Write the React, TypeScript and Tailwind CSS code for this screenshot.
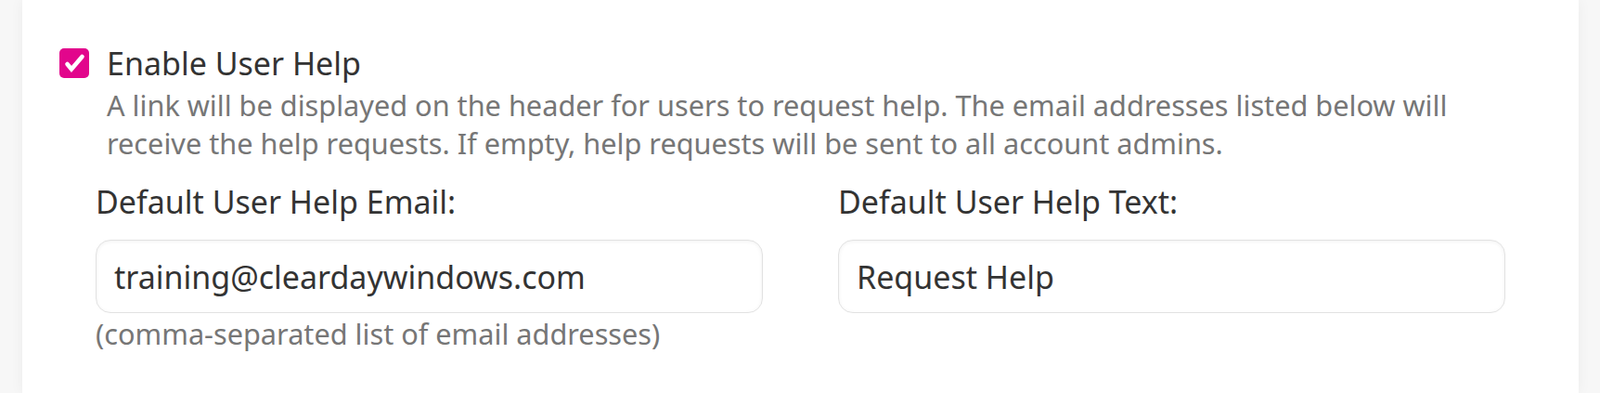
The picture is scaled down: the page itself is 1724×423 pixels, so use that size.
import React, { useState } from 'react';

export default function App() {
  const [enabled, setEnabled] = useState(true);
  const [email, setEmail] = useState('training@cleardaywindows.com');
  const [helpText, setHelpText] = useState('Request Help');

  return (
    <div
      className="min-h-screen w-full bg-[#f7f7f7] pl-[24px] pr-[23px]"
      style={{ fontFamily: '"Noto Sans", "Open Sans", sans-serif' }}
    >
      <div className="min-h-[423px] bg-white shadow-[0_0_14px_rgba(0,0,0,0.05)] pl-[40px] pt-[52px]">
        <div className="flex items-start gap-[19px]">
          <button
            type="button"
            onClick={() => setEnabled(!enabled)}
            className={
              'flex h-[32px] w-[32px] shrink-0 items-center justify-center rounded-[5px] ' +
              (enabled ? 'bg-[#e2068c]' : 'border border-[#ccc] bg-white')
            }
          >
            {enabled && (
              <svg width="32" height="32" viewBox="0 0 32 32" fill="none">
                <path d="M8.5 17l4.5 5.5L24.5 9" stroke="white" strokeWidth="4.6" strokeLinecap="round" strokeLinejoin="miter" />
              </svg>
            )}
          </button>
          <div>
            <div className="text-[34px] leading-[32px] text-[#333]">Enable User Help</div>
            <p className="mt-[9px] text-[30.7px] leading-[41px] text-[#767676]">
              A link will be displayed on the header for users to request help. The email addresses listed below will
              <br />
              receive the help requests. If empty, help requests will be sent to all account admins.
            </p>
          </div>
        </div>

        <div className="mt-[22px] ml-[39px] flex gap-[81px]">
          <div className="w-[719px]">
            <label className="block text-[34px] leading-[40px] text-[#333]">Default User Help Email:</label>
            <input
              value={email}
              onChange={(e) => setEmail(e.target.value)}
              className="mt-[21px] h-[79px] w-full rounded-[16px] border border-[#e2e2e2] bg-white px-[19px] text-[34px] text-[#333] shadow-[inset_0_1px_4px_rgba(0,0,0,0.06)] outline-none"
            />
            <div className="mt-[4px] text-[30.7px] leading-[36px] text-[#767676]">(comma-separated list of email addresses)</div>
          </div>
          <div className="w-[719px]">
            <label className="block text-[34px] leading-[40px] text-[#333]">Default User Help Text:</label>
            <input
              value={helpText}
              onChange={(e) => setHelpText(e.target.value)}
              className="mt-[21px] h-[79px] w-full rounded-[16px] border border-[#e2e2e2] bg-white px-[19px] text-[34px] text-[#333] shadow-[inset_0_1px_4px_rgba(0,0,0,0.06)] outline-none"
            />
          </div>
        </div>
      </div>
    </div>
  );
}
